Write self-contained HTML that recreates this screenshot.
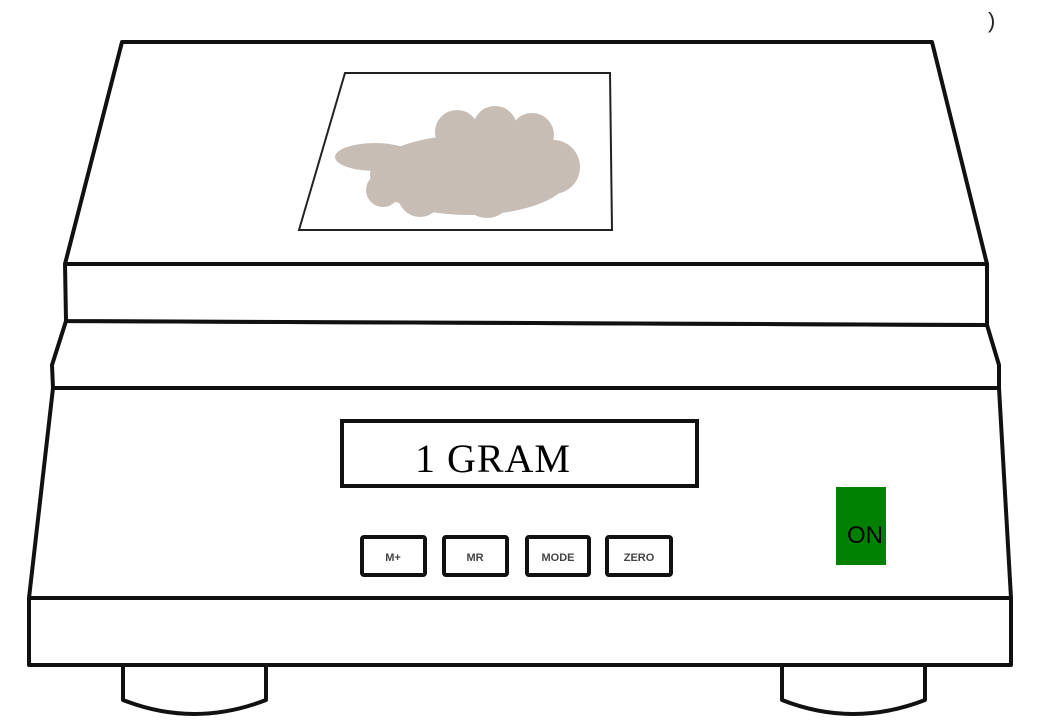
<!DOCTYPE html>
<html><head><style>
html,body{margin:0;padding:0;background:#fff;width:1044px;height:727px;overflow:hidden}
</style></head><body>
<svg width="1044" height="727" viewBox="0 0 1044 727" xmlns="http://www.w3.org/2000/svg">
<text x="988" y="28" font-family="Liberation Sans, sans-serif" font-size="22" fill="#222">)</text>
<g fill="none" stroke="#111" stroke-width="4" stroke-linejoin="round">
<path d="M123 665 V700 Q194 728 266 700 V665" fill="#fff"/>
<path d="M782 665 V700 Q853 728 925 700 V665" fill="#fff"/>
<path d="M29 598 H1011 V665 H29 Z" fill="#fff"/>
<path d="M53 388 L29 598 H1011 L999 388 Z" fill="#fff"/>
<path d="M66 321 L52 365 L53 388 H999 L999 365 L987 325 Z" fill="#fff"/>
<path d="M65 264 H987 V325 L66 321 Z" fill="#fff"/>
<path d="M122 42 H932 L987 264 H65 Z" fill="#fff"/>
</g>
<path d="M345 73 H610 L612 230 H299 Z" fill="#fff" stroke="#222" stroke-width="2"/>
<g fill="#c8bdb5">
<ellipse cx="375" cy="157" rx="40" ry="14"/>
<ellipse cx="470" cy="175" rx="100" ry="40"/>
<circle cx="457" cy="132" r="22"/>
<circle cx="495" cy="128" r="22"/>
<circle cx="532" cy="135" r="22"/>
<circle cx="553" cy="167" r="27"/>
<circle cx="383" cy="190" r="17"/>
<circle cx="487" cy="192" r="26"/>
<circle cx="420" cy="195" r="22"/>
</g>
<rect x="342" y="421" width="355" height="65" fill="#fff" stroke="#111" stroke-width="4"/>
<text x="415" y="472" font-family="Liberation Serif, serif" font-size="40" fill="#000" textLength="155">1 GRAM</text>
<g fill="#fff" stroke="#111" stroke-width="4">
<rect x="362" y="537" width="63" height="38" rx="2"/>
<rect x="444" y="537" width="63" height="38" rx="2"/>
<rect x="527" y="537" width="62" height="38" rx="2"/>
<rect x="607" y="537" width="64" height="38" rx="2"/>
</g>
<g font-family="Liberation Sans, sans-serif" font-size="11" font-weight="bold" fill="#444" text-anchor="middle">
<text x="393" y="561">M+</text>
<text x="475" y="561">MR</text>
<text x="558" y="561">MODE</text>
<text x="639" y="561">ZERO</text>
</g>
<rect x="836" y="487" width="50" height="78" fill="#008000"/>
<text x="865" y="543" font-family="Liberation Sans, sans-serif" font-size="24" fill="#000" text-anchor="middle">ON</text>
</svg>
</body></html>
